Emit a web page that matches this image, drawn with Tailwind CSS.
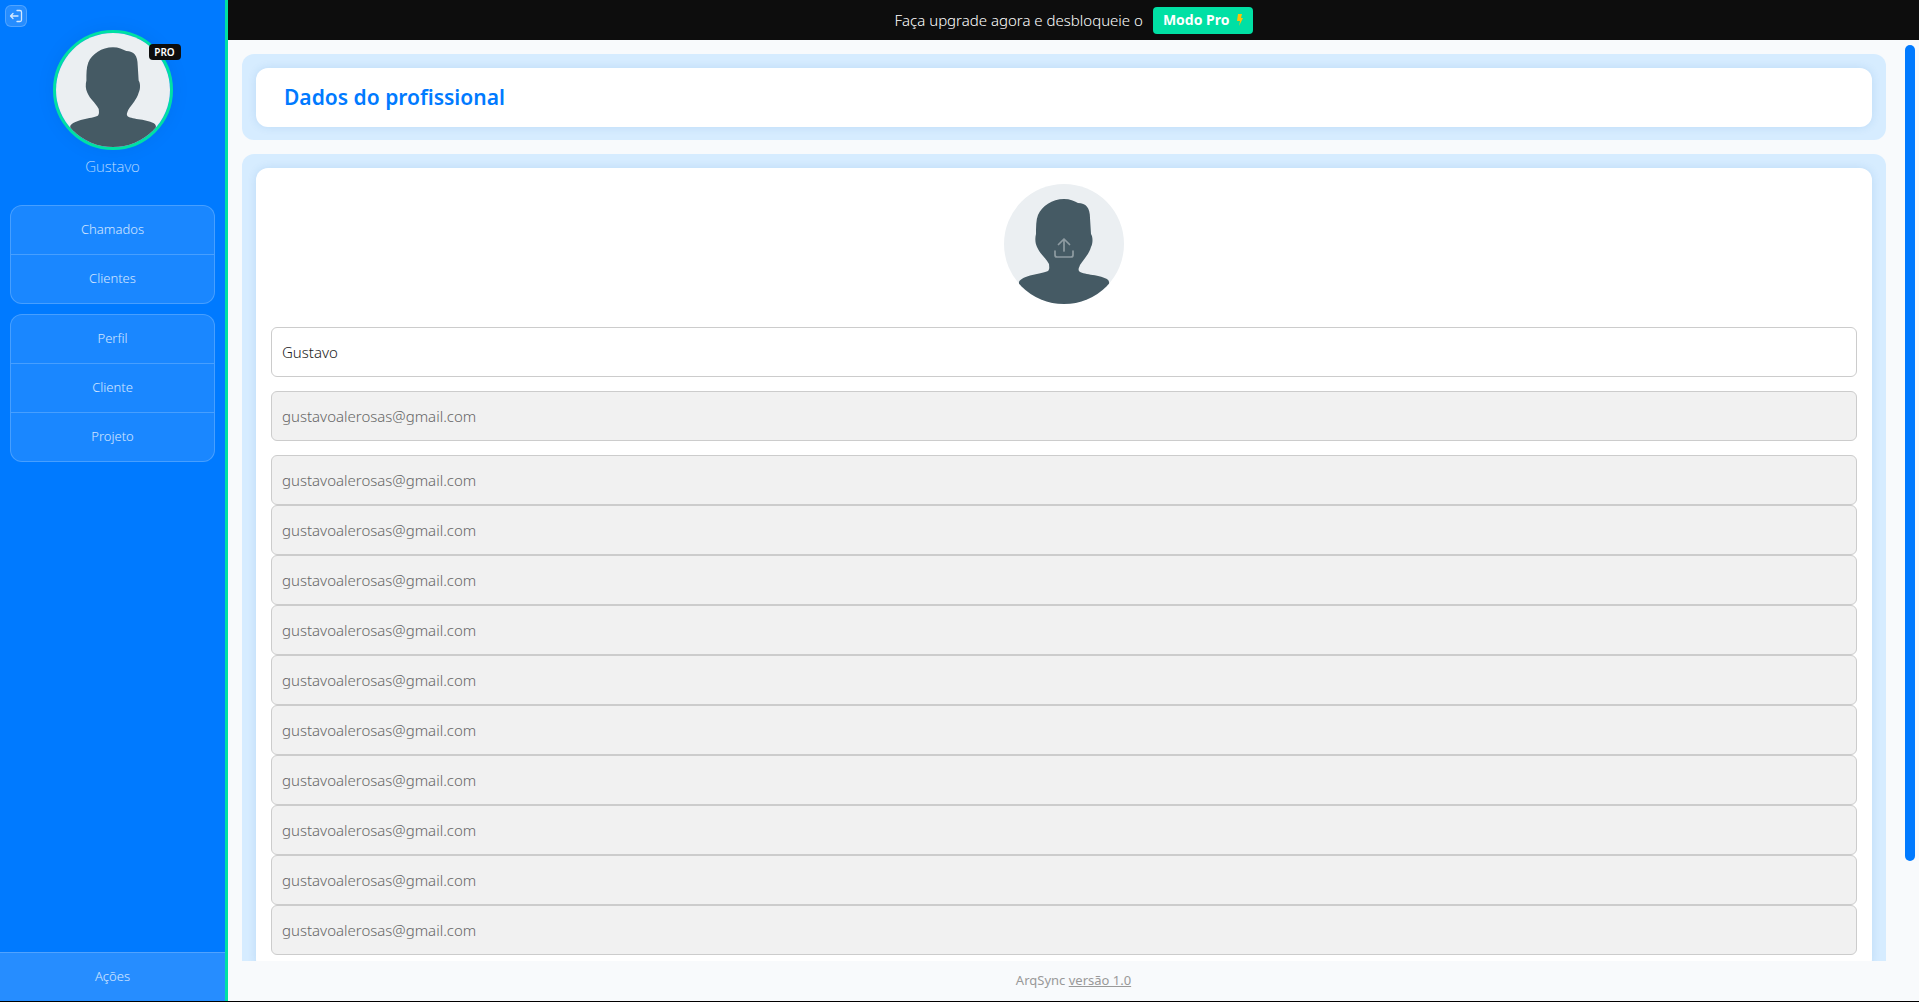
<!DOCTYPE html>
<html lang="pt-BR">
<head>
<meta charset="utf-8">
<title>ArqSync</title>
<script src="https://cdn.jsdelivr.net/npm/@tailwindcss/browser@4"></script>
</head>
<body class="flex h-screen overflow-hidden border-b border-black bg-[#f8fafc] font-['Noto_Sans','Open_Sans',sans-serif] font-light">
<svg class="hidden">
  <symbol id="person" viewBox="0 0 120 120">
    <rect width="120" height="120" fill="#ebeff2"/>
    <path fill="#455a64" d="M60 15C66 15 70 17 74 19C82 19 86 24 86 34L87 50C89 53 89 59 87 63C85 70 80 75 76 81C75 84 74 85 75 87C78 91 94 90 103 95Q106 97 105 101V120H15V98C18 91 38 90 44 87C46 85 45 82 45 80C41 73 36 70 33 63C31 59 31 54 32 50C32 43 32 36 34 31C38 22 48 15 60 15Z"/>
  </symbol>
</svg>

<aside class="flex w-[228px] shrink-0 flex-col border-r-3 border-[#00e0a4] bg-[#007aff] text-[13px] text-white/80">
  <div class="relative flex flex-col items-center pt-[30px]">
    <button aria-label="Sair" class="absolute top-[5px] left-[5px] flex size-[22px] items-center justify-center rounded-md border border-white/20 bg-white/15">
      <svg class="size-3.5" viewBox="0 0 14 14" fill="none" stroke="currentColor" stroke-width="1.3" stroke-linecap="round" stroke-linejoin="round"><path d="M8 1.5h3q1.500 0 1.500 1.500v8q0 1.500-1.500 1.500h-3M9 7H1.500M4 4.500L1.500 7L4 9.500"/></svg>
    </button>
    <div class="relative">
      <svg class="size-[120px] rounded-full border-3 border-[#00e0a4] shadow-[0_0_20px_rgba(0,0,0,0.06)]" role="img" aria-label="Foto de Gustavo"><use href="#person"/></svg>
      <span class="absolute top-3.5 -right-2 flex h-4 w-8 items-center justify-center rounded bg-[#0d0d0d] text-[10px] font-semibold text-white">PRO</span>
    </div>
    <p class="mt-1 text-[15px] leading-6 font-extralight">Gustavo</p>
  </div>
  <nav class="mt-[27px] flex flex-col gap-2.5 px-2.5">
    <div class="flex flex-col divide-y divide-white/20 overflow-hidden rounded-xl border border-white/20 bg-white/10">
      <button class="h-12 box-content">Chamados</button>
      <button class="h-12 box-content">Clientes</button>
    </div>
    <div class="flex flex-col divide-y divide-white/20 overflow-hidden rounded-xl border border-white/20 bg-white/10">
      <button class="h-12 box-content">Perfil</button>
      <button class="h-12 box-content">Cliente</button>
      <button class="h-12 box-content">Projeto</button>
    </div>
  </nav>
  <button class="mt-auto h-[49px] border-t border-white/20 bg-white/15">Ações</button>
</aside>

<div class="flex min-w-0 flex-1 flex-col">
  <header class="flex h-10 shrink-0 items-center justify-center gap-2.5 bg-[#0d0d0d] text-[15px] text-white">
    <span>Faça upgrade agora e desbloqueie o</span>
    <button class="flex h-[27px] items-center gap-[7px] rounded bg-[#00e0a4] px-2.5 text-sm font-bold">Modo Pro
      <svg class="h-3 w-1.5" viewBox="0 0 6 12"><path fill="#ffc107" d="M1 0H5L4 4H6L2 12L3 7H0Z"/></svg>
    </button>
  </header>
  <div class="flex min-h-0 flex-1">
    <main class="flex min-w-0 flex-1 flex-col gap-3.5 overflow-hidden p-3.5">
      <section class="shrink-0 rounded-xl bg-[#d6ecff] px-3.5 pt-3.5 pb-[13px]">
        <h1 class="flex h-[59px] items-center rounded-xl bg-white px-7 text-[21px] font-semibold text-[#007aff] shadow-[0_0_10px_rgba(0,100,180,0.12)]">Dados do profissional</h1>
      </section>
      <section class="shrink-0 rounded-xl bg-[#d6ecff] px-3.5 pt-3.5 pb-[13px]">
        <form class="flex flex-col gap-3.5 rounded-xl bg-white px-[15px] py-4 text-[15px] text-[#222] shadow-[0_0_10px_rgba(0,100,180,0.12)]">
          <button type="button" aria-label="Enviar foto" class="relative mb-[9px] size-[120px] self-center overflow-hidden rounded-full">
            <svg class="size-full"><use href="#person"/></svg>
            <svg class="absolute top-[53px] left-[49px] size-[22px] text-[#8f9ca2]" viewBox="0 0 22 22" fill="none" stroke="currentColor" stroke-width="1.700" stroke-linecap="round" stroke-linejoin="round"><path d="M2 14v4q0 2 2 2h14q2 0 2-2v-4M11 14V2M5.500 7.500L11 2l5.500 5.500"/></svg>
          </button>
          <input aria-label="Nome" value="Gustavo" class="h-[50px] rounded-md border border-[#ccc] bg-white px-2.5">
          <input aria-label="E-mail" disabled value="gustavoalerosas@gmail.com" class="h-[50px] rounded-md border border-[#ccc] bg-[#f1f1f1] px-2.5 text-[#666]">
          <div id="emails" class="flex flex-col"></div>
        </form>
      </section>
    </main>
    <div class="w-[19px] shrink-0 py-[5px] pl-[5px]"><div class="h-[89.6%] w-2.5 rounded-full bg-[#007aff]"></div></div>
  </div>
  <footer class="flex h-10 shrink-0 items-center justify-center text-[13px] font-normal text-[#999]">
    <p>ArqSync <a href="#" class="underline">versão 1.0</a></p>
  </footer>
</div>
<script>
  const list = document.getElementById('emails');
  for (let i = 1; i <= 10; i++) {
    const field = document.createElement('input');
    field.disabled = true;
    field.value = 'gustavoalerosas@gmail.com';
    field.setAttribute('aria-label', 'Contato ' + i);
    field.className = 'h-[50px] rounded-md border border-[#ccc] bg-[#f1f1f1] px-2.5 text-[#666]';
    list.append(field);
  }
</script>
</body>
</html>
